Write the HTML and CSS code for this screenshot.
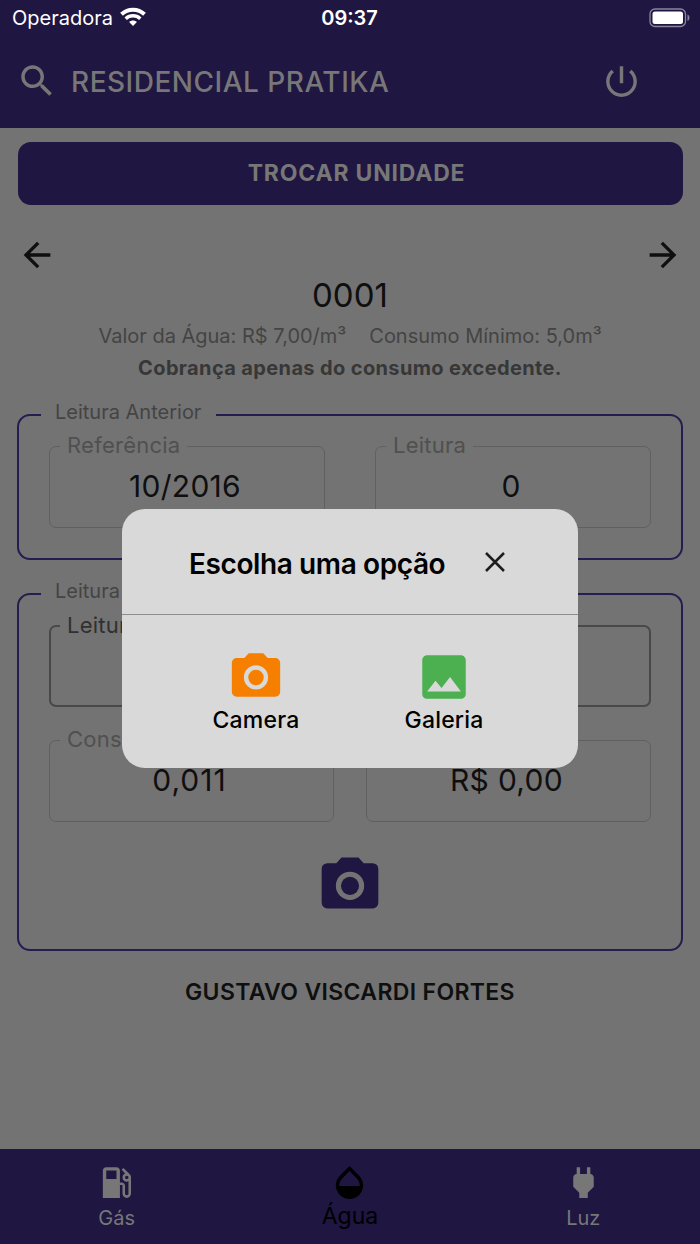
FILE: index.html
```
<!DOCTYPE html>
<html lang="pt-BR">
<head>
    <meta charset="UTF-8">
    <meta name="viewport" content="width=device-width, initial-scale=1.0">
    <title>Residencial Pratika</title>
    <link rel="stylesheet" href="styles.css">
</head>
<body>

    <!-- Status bar -->
    <div class="status-bar">
        <div class="carrier">
            <span>Operadora</span>
            <svg width="26" height="20" viewBox="0 0 26 20">
                <path d="M1.500 7.300C8 1.200 18 1.200 24.500 7.300" fill="none" stroke="#fff" stroke-width="4"/>
                <path d="M5.700 11.700c4.200-3.800 10.400-3.800 14.600 0" fill="none" stroke="#fff" stroke-width="3.500"/>
                <path d="M13 19l-3.900-3.900c2.300-2 5.500-2 7.800 0z" fill="#fff"/>
            </svg>
        </div>
        <div class="clock">09:37</div>
        <svg class="battery" width="42" height="20" viewBox="0 0 42 20">
            <rect x="1" y="1" width="35.500" height="17.500" rx="5" fill="none" stroke="#8a849f" stroke-width="1.300"/>
            <rect x="3.500" y="3.500" width="30.500" height="12.500" rx="2.500" fill="#fff"/>
            <path d="M38.500 6.500c2.600 1.200 2.600 5.300 0 6.500z" fill="#8a849f"/>
        </svg>
    </div>

    <!-- Header -->
    <header class="header">
        <svg width="42" height="42" viewBox="0 0 24 24"><path d="M15.500 14h-.79l-.28-.27C15.410 12.590 16 11.110 16 9.500 16 5.910 13.090 3 9.500 3S3 5.910 3 9.500 5.910 16 9.500 16c1.610 0 3.090-.59 4.230-1.570l.27.28v.79l5 4.990L20.490 19l-4.990-5zm-6 0C7.010 14 5 11.990 5 9.500S7.010 5 9.500 5 14 7.010 14 9.500 11.990 14 9.500 14z"/></svg>
        <h1>RESIDENCIAL PRATIKA</h1>
        <svg width="41" height="41" viewBox="0 0 24 24"><path d="M13 3h-2v10h2V3zm4.830 2.170l-1.420 1.420C17.990 7.860 19 9.810 19 12c0 3.870-3.130 7-7 7s-7-3.130-7-7c0-2.190 1.010-4.140 2.580-5.420L6.170 5.170C4.230 6.820 3 9.260 3 12c0 4.970 4.030 9 9 9s9-4.030 9-9c0-2.740-1.230-5.180-3.170-6.830z"/></svg>
    </header>

    <main>
        <button class="change-unit">TROCAR UNIDADE</button>

        <div class="arrows">
            <svg width="40" height="40" viewBox="0 0 24 24"><path d="M20 11H7.830l5.590-5.590L12 4l-8 8 8 8 1.410-1.410L7.830 13H20v-2z"/></svg>
            <svg width="40" height="40" viewBox="0 0 24 24"><path d="M12 4l-1.410 1.410L16.170 11H4v2h12.170l-5.580 5.590L12 20l8-8z"/></svg>
        </div>

        <h2 class="unit">0001</h2>
        <p class="rates"><span>Valor da Água: R$ 7,00/m³</span><span>Consumo Mínimo: 5,0m³</span></p>
        <p class="notice">Cobrança apenas do consumo excedente.</p>

        <fieldset class="group previous">
            <legend>Leitura Anterior</legend>
            <div class="row">
                <fieldset class="field">
                    <legend>Referência</legend>
                    <div class="value">10/2016</div>
                </fieldset>
                <fieldset class="field">
                    <legend>Leitura</legend>
                    <div class="value">0</div>
                </fieldset>
            </div>
        </fieldset>

        <fieldset class="group current">
            <legend>Leitura Atual</legend>
            <fieldset class="field editable">
                <legend>Leitura</legend>
            </fieldset>
            <div class="row">
                <fieldset class="field">
                    <legend>Consumo</legend>
                    <div class="value consumption">0,011</div>
                </fieldset>
                <div class="field total">
                    <div class="value">R$ 0,00</div>
                </div>
            </div>
            <svg class="photo" width="68" height="68" viewBox="0 0 24 24">
                <path fill-rule="evenodd" d="M9 3h6l1.830 2H20a2 2 0 0 1 2 2v12a2 2 0 0 1-2 2H4a2 2 0 0 1-2-2V7a2 2 0 0 1 2-2h3.170zM12 8a5 5 0 1 0 0 10 5 5 0 1 0 0-10z"/>
                <circle cx="12" cy="13" r="3.200"/>
            </svg>
        </fieldset>

        <p class="owner">GUSTAVO VISCARDI FORTES</p>
    </main>

    <!-- Bottom tabs -->
    <nav class="tabs">
        <div class="tab">
            <svg width="41" height="41" viewBox="0 0 24 24"><path d="M19.770 7.230l.01-.01-3.720-3.720L15 4.560l2.110 2.110c-.94.36-1.610 1.260-1.610 2.330 0 1.380 1.120 2.500 2.500 2.500.36 0 .69-.08 1-.21v7.210c0 .55-.45 1-1 1s-1-.45-1-1V14c0-1.100-.9-2-2-2h-1V5c0-1.100-.9-2-2-2H6c-1.100 0-2 .9-2 2v16h10v-7.500h1.500v5c0 1.380 1.120 2.500 2.500 2.500s2.500-1.120 2.500-2.500V9c0-.69-.28-1.320-.73-1.770zM12 10H6V5h6v5zm6 0c-.55 0-1-.45-1-1s.45-1 1-1 1 .45 1 1-.45 1-1 1z"/></svg>
            <span>Gás</span>
        </div>
        <div class="tab active">
            <svg width="41" height="41" viewBox="0 0 24 24"><path d="M17.660 8L12 2.350 6.340 8C4.780 9.560 4 11.640 4 13.640s.78 4.110 2.340 5.670 3.610 2.350 5.660 2.350 4.100-.79 5.660-2.350S20 15.640 20 13.640 19.220 9.560 17.660 8zM6 14c.01-2 .62-3.270 1.760-4.400L12 5.270l4.240 4.380C17.380 10.770 17.990 12 18 14H6z"/></svg>
            <span>Água</span>
        </div>
        <div class="tab">
            <svg width="41" height="41" viewBox="0 0 24 24"><path d="M16.010 7L16 3h-2v4h-4V3H8v4h-.01C7 6.990 6 7.990 6 8.990v5.490L9.500 18v3h5v-3l3.500-3.510v-5.500c0-1-1-2-1.990-1.990z"/></svg>
            <span>Luz</span>
        </div>
    </nav>

    <!-- Photo source dialog -->
    <div class="modal">
        <div class="modal-header">
            <h3>Escolha uma opção</h3>
            <svg width="20" height="20" viewBox="0 0 20 20"><path d="M1 1l18 18M19 1L1 19" stroke="#1e1e1e" stroke-width="2.500"/></svg>
        </div>
        <div class="modal-options">
            <div class="option camera">
                <svg width="58" height="58" viewBox="0 0 24 24">
                    <path fill-rule="evenodd" d="M9 3h6l1.830 2H20a2 2 0 0 1 2 2v12a2 2 0 0 1-2 2H4a2 2 0 0 1-2-2V7a2 2 0 0 1 2-2h3.170zM12 8a5 5 0 1 0 0 10 5 5 0 1 0 0-10z"/>
                    <circle cx="12" cy="13" r="3.200"/>
                </svg>
                <span>Camera</span>
            </div>
            <div class="option gallery">
                <svg width="58" height="58" viewBox="0 0 24 24"><path d="M21 19V5c0-1.100-.9-2-2-2H5c-1.100 0-2 .9-2 2v14c0 1.100.9 2 2 2h14c1.100 0 2-.9 2-2zM8.500 13.500l2.500 3.010L14.500 12l4.500 6H5z"/></svg>
                <span>Galeria</span>
            </div>
        </div>
    </div>

</body>
</html>
```

FILE: styles.css
```
/* Color scheme */
:root {
    --primary-color: #1f1642;
    --background-color: #737373;
    --muted-color: #444;
    --text-color: #0f0f0f;
    --modal-color: #d9d9d9;
}

* {
    margin: 0;
    padding: 0;
    box-sizing: border-box;
}

body {
    position: relative;
    width: 700px;
    height: 1244px;
    overflow: hidden;
    display: flex;
    flex-direction: column;
    font-family: Inter, "Liberation Sans", sans-serif;
    background-color: var(--background-color);
    color: var(--text-color);
}

svg {
    display: block;
    flex: none;
    fill: currentColor;
}

/* Status bar */
.status-bar {
    height: 36px;
    padding: 0 9px 0 8px;
    display: grid;
    grid-template-columns: 1fr auto 1fr;
    align-items: center;
    color: #fff;
    background-color: var(--primary-color);
    font-size: 20px;
}

.carrier {
    display: flex;
    align-items: center;
    gap: 7px;
    margin-left: 4px;
}

.carrier svg {
    margin-top: -3px;
}

.clock {
    font-weight: 600;
}

.battery {
    justify-self: end;
    margin-top: -1px;
}

/* Header */
.header {
    height: 92px;
    padding: 0 58px 2px 16px;
    display: flex;
    align-items: center;
    color: #777;
    background-color: var(--primary-color);
}

.header h1 {
    flex: 1;
    margin: 1px 0 0 13px;
    font-size: 28px;
    font-weight: 500;
    letter-spacing: .5px;
}

main {
    flex: 1;
    padding: 14px 17px 0;
}

.change-unit {
    display: block;
    width: 665px;
    height: 63px;
    margin-left: .5px;
    padding: 0 0 2px 13px;
    border: none;
    border-radius: 13px;
    background: var(--primary-color);
    color: #777;
    font: 700 23px Inter, sans-serif;
    letter-spacing: .8px;
}

.arrows {
    display: flex;
    justify-content: space-between;
    height: 40px;
    margin-top: 30px;
}

.unit {
    line-height: 40px;
    text-align: center;
    font-size: 33px;
    font-weight: 400;
}

.rates {
    display: flex;
    justify-content: center;
    gap: 23px;
    margin-top: 5px;
    line-height: 32px;
    font-size: 20px;
    color: var(--muted-color);
}

.notice {
    line-height: 32px;
    text-align: center;
    font-size: 20px;
    font-weight: 700;
    letter-spacing: .37px;
    color: #373737;
}

/* Outlined groups */
.group {
    width: 666px;
    padding: 4px 30px 0;
    border: 2px solid #261c50;
    border-radius: 13px;
}

.group > legend {
    margin-left: -8px;
    padding: 0 15px 6px 14px;
    line-height: 22px;
    font-size: 20px;
    color: var(--muted-color);
}

.previous {
    height: 159px;
    margin-top: 17px;
}

.current {
    height: 371px;
    margin-top: 20px;
    padding-top: 5px;
}

.row {
    display: flex;
    justify-content: space-between;
}

.field {
    width: 276px;
    height: 95px;
    border: 1px solid #606060;
    border-radius: 7px;
}

.field legend {
    margin-left: 10px;
    padding: 0 7px 2px;
    line-height: 24px;
    font-size: 22px;
    letter-spacing: .25px;
    color: #505050;
}

.value {
    line-height: 38px;
    padding: 8px 4px 0 0;
    text-align: center;
    font-size: 30px;
    letter-spacing: .3px;
}

.consumption {
    letter-spacing: 1px;
}

.editable {
    width: 602px;
    height: 94px;
    border: 2px solid #494949;
}

.editable legend {
    margin-left: 9px;
    color: #303030;
}

.current .row {
    margin-top: 20px;
}

.current .row .field {
    width: 285px;
}

/* plain box, its top edge lines up with the legend borders */
.current .row .total {
    height: 82px;
    margin-top: 13px;
    padding-top: 12px;
}

.photo {
    margin: 27px auto 0;
    color: var(--primary-color);
}

.owner {
    margin-top: 24px;
    line-height: 35px;
    text-align: center;
    font-size: 23px;
    font-weight: 600;
    letter-spacing: .35px;
}

/* Bottom tabs */
.tabs {
    height: 95px;
    display: flex;
    background-color: var(--primary-color);
    color: #777;
}

.tab {
    flex: 1;
    display: flex;
    flex-direction: column;
    align-items: center;
    padding-top: 13px;
    font-size: 20px;
    line-height: 30px;
}

.tab.active {
    color: #000;
    font-size: 23px;
    line-height: 27px;
}

/* Dialog */
.modal {
    position: absolute;
    top: 509px;
    left: 122px;
    width: 456px;
    height: 259px;
    border-radius: 23px;
    background: var(--modal-color);
    color: #000;
}

.modal-header {
    height: 106px;
    display: flex;
    align-items: center;
    padding-left: 67px;
    border-bottom: 1px solid #8e8e8e;
}

.modal-header h3 {
    width: 296px;
    padding-top: 4px;
    font-size: 28px;
    font-weight: 600;
    letter-spacing: -.4px;
    white-space: nowrap;
}

.modal-options {
    display: flex;
    justify-content: space-around;
    padding: 33px 40px 0;
}

.option {
    width: 188px;
    display: flex;
    flex-direction: column;
    align-items: center;
    font-size: 23px;
    font-weight: 500;
    letter-spacing: .2px;
    line-height: 28px;
}

.option.camera svg {
    margin: -2px 0 2px;
    color: #f77f00;
}

.option.gallery svg {
    color: #4caf50;
}
```
